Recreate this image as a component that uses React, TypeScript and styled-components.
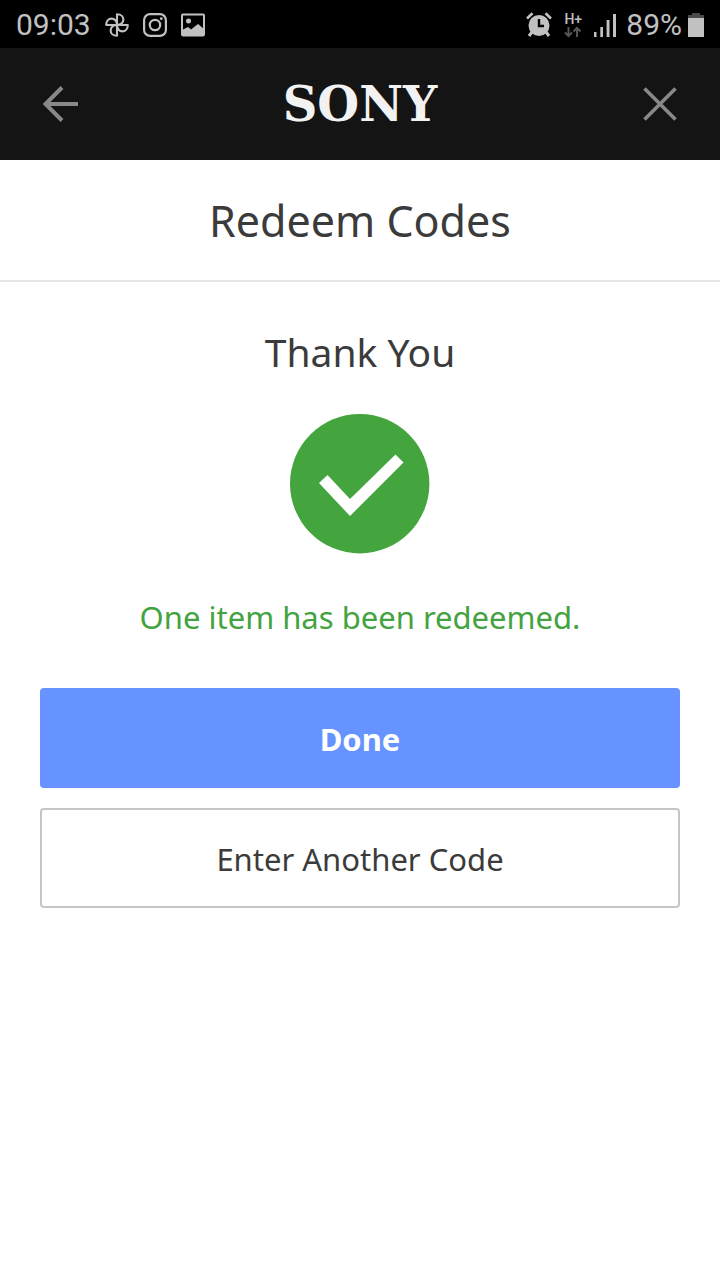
import React from 'react';
import styled, { createGlobalStyle } from 'styled-components';

const GlobalStyle = createGlobalStyle`
  * { box-sizing: border-box; }
  body {
    margin: 0;
    background: #fff;
    color: #3b3b3b;
    font-family: "Noto Sans", "Open Sans", sans-serif;
  }
`;

const StatusBar = styled.div`
  display: flex;
  align-items: center;
  justify-content: space-between;
  height: 48px;
  padding: 2px 16px 0;
  background: #000;
  color: #c1c1c1;
  font: 400 30px/48px Roboto, sans-serif;
`;

const StatusGroup = styled.div<{ $gap: number }>`
  display: flex;
  align-items: center;
  gap: ${(p) => p.$gap}px;
`;

const Network = styled.div`
  display: flex;
  flex-direction: column;
  align-items: center;
  width: 22px;
  font: 500 14px/14px Roboto, sans-serif;
`;

const Header = styled.header`
  display: flex;
  align-items: center;
  justify-content: space-between;
  height: 112px;
  padding: 0 40px;
  background: #141414;
`;

const IconButton = styled.button`
  display: flex;
  padding: 0;
  border: 0;
  background: none;
  color: #888;
  cursor: pointer;
`;

const Brand = styled.span`
  color: #f2f2f2;
  font: 700 48px/56px "DejaVu Serif", serif;
`;

const TitleBar = styled.div`
  padding: 31px 40px 29px;
  border-bottom: 2px solid #e5e5e5;
  text-align: center;
`;

const Title = styled.h1`
  margin: 0;
  font-size: 43px;
  font-weight: 400;
  line-height: 60px;
`;

const Content = styled.main`
  display: flex;
  flex-direction: column;
  align-items: center;
  padding: 42px 40px;
`;

const Heading = styled.h2`
  margin: 0 0 34px;
  font-size: 39px;
  font-weight: 400;
  line-height: 56px;
`;

const Message = styled.p`
  margin: 40px 0 48px;
  color: #43a33f;
  font-size: 31px;
  line-height: 46px;
  text-align: center;
`;

const Actions = styled.div`
  display: flex;
  flex-direction: column;
  align-self: stretch;
  gap: 20px;
`;

const ActionButton = styled.button<{ $primary?: boolean }>`
  height: 100px;
  padding: 2px 20px 0;
  border: 2px solid ${(p) => (p.$primary ? '#6693ff' : '#c6c6c6')};
  border-radius: 4px;
  background: ${(p) => (p.$primary ? '#6693ff' : '#fff')};
  color: ${(p) => (p.$primary ? '#fff' : '#3b3b3b')};
  font-family: inherit;
  font-size: 31px;
  font-weight: ${(p) => (p.$primary ? 700 : 400)};
  line-height: 44px;
  cursor: pointer;
`;

const PinwheelIcon = () => (
  <svg width="24" height="24" viewBox="0 0 24 24" fill="none" stroke="currentColor" strokeWidth="2.100" strokeLinejoin="round" aria-hidden="true">
    <path d="M12 12V1.200C20.500 1.200 20.500 12 12 12M12 12H22.800C22.800 20.500 12 20.500 12 12M12 12V22.800C3.500 22.800 3.500 12 12 12M12 12H1.200C1.200 3.500 12 3.500 12 12" />
  </svg>
);

const CameraIcon = () => (
  <svg width="24" height="24" viewBox="0 0 24 24" fill="none" stroke="currentColor" strokeWidth="2.200" aria-hidden="true">
    <rect x="1.100" y="1.100" width="21.800" height="21.800" rx="6" />
    <circle cx="12" cy="12" r="5.200" />
    <circle cx="18.300" cy="5.700" r="1.400" fill="currentColor" stroke="none" />
  </svg>
);

const PictureIcon = () => (
  <svg width="24" height="24" viewBox="0 0 24 24" aria-hidden="true">
    <rect x="1" y="1.500" width="22" height="21" rx="1" fill="none" stroke="currentColor" strokeWidth="2" />
    <circle cx="7.500" cy="8" r="2.500" fill="currentColor" />
    <path d="M1 17L7 14L10 16.500L17 11L23 16V23H1Z" fill="currentColor" />
  </svg>
);

const AlarmIcon = () => (
  <svg width="26" height="26" viewBox="0 0 26 26" aria-hidden="true">
    <circle cx="13" cy="13.500" r="10.500" fill="currentColor" />
    <path d="M1 6.500L6.500 1.200M25 6.500L19.500 1.200" stroke="currentColor" strokeWidth="2.600" />
    <path d="M6 20L3 24M20 20L23 24" stroke="currentColor" strokeWidth="3" />
    <path d="M13 7V14H18" fill="none" stroke="#000" strokeWidth="2.400" />
  </svg>
);

const DataArrows = () => (
  <svg width="18" height="12" viewBox="0 0 18 12" fill="none" stroke="#555" strokeWidth="2" aria-hidden="true">
    <path d="M4.500 1V10M1 6.500L4.500 10L8 6.500M13 11V2M9.500 5.500L13 2L16.500 5.500" />
  </svg>
);

const SignalIcon = () => (
  <svg width="22" height="24" viewBox="0 0 22 24" fill="currentColor" aria-hidden="true">
    <path d="M0 19H2.500V24H0ZM6.300 14H9V24H6.300ZM12.600 7H15.500V24H12.600ZM19 1H22V24H19Z" />
  </svg>
);

const BatteryIcon = () => (
  <svg width="16" height="24" viewBox="0 0 16 24" aria-hidden="true">
    <path d="M4 0H12V2H16V6H0V2H4Z" fill="#4a4a4a" />
    <rect y="5" width="16" height="19" fill="currentColor" />
  </svg>
);

const BackIcon = () => (
  <svg width="40" height="40" viewBox="0 0 40 40" fill="none" stroke="currentColor" strokeWidth="4" aria-hidden="true">
    <path d="M38 20H5M22 3.500L5.500 20L22 36.500" />
  </svg>
);

const CloseIcon = () => (
  <svg width="40" height="40" viewBox="0 0 40 40" fill="none" stroke="currentColor" strokeWidth="3.600" aria-hidden="true">
    <path d="M4.500 4.500L35.500 35.500M35.500 4.500L4.500 35.500" />
  </svg>
);

const SuccessIcon = () => (
  <svg width="140" height="140" viewBox="0 0 140 140" role="img" aria-label="Success">
    <circle cx="69.700" cy="69.700" r="69.700" fill="#44a53e" />
    <path d="M29 69L37.500 61L60 85L105.500 40.500L113.500 48.500L60 102Z" fill="#fff" />
  </svg>
);

export default function App() {
  return (
    <>
      <GlobalStyle />
      <StatusBar>
        <StatusGroup $gap={14}>
          <span>09:03</span>
          <PinwheelIcon />
          <CameraIcon />
          <PictureIcon />
        </StatusGroup>
        <StatusGroup $gap={10}>
          <AlarmIcon />
          <Network>
            <span>H+</span>
            <DataArrows />
          </Network>
          <SignalIcon />
          <StatusGroup $gap={6}>
            <span>89%</span>
            <BatteryIcon />
          </StatusGroup>
        </StatusGroup>
      </StatusBar>
      <Header>
        <IconButton type="button" aria-label="Back">
          <BackIcon />
        </IconButton>
        <Brand>SONY</Brand>
        <IconButton type="button" aria-label="Close">
          <CloseIcon />
        </IconButton>
      </Header>
      <TitleBar>
        <Title>Redeem Codes</Title>
      </TitleBar>
      <Content>
        <Heading>Thank You</Heading>
        <SuccessIcon />
        <Message>One item has been redeemed.</Message>
        <Actions>
          <ActionButton type="button" $primary>
            Done
          </ActionButton>
          <ActionButton type="button">Enter Another Code</ActionButton>
        </Actions>
      </Content>
    </>
  );
}
